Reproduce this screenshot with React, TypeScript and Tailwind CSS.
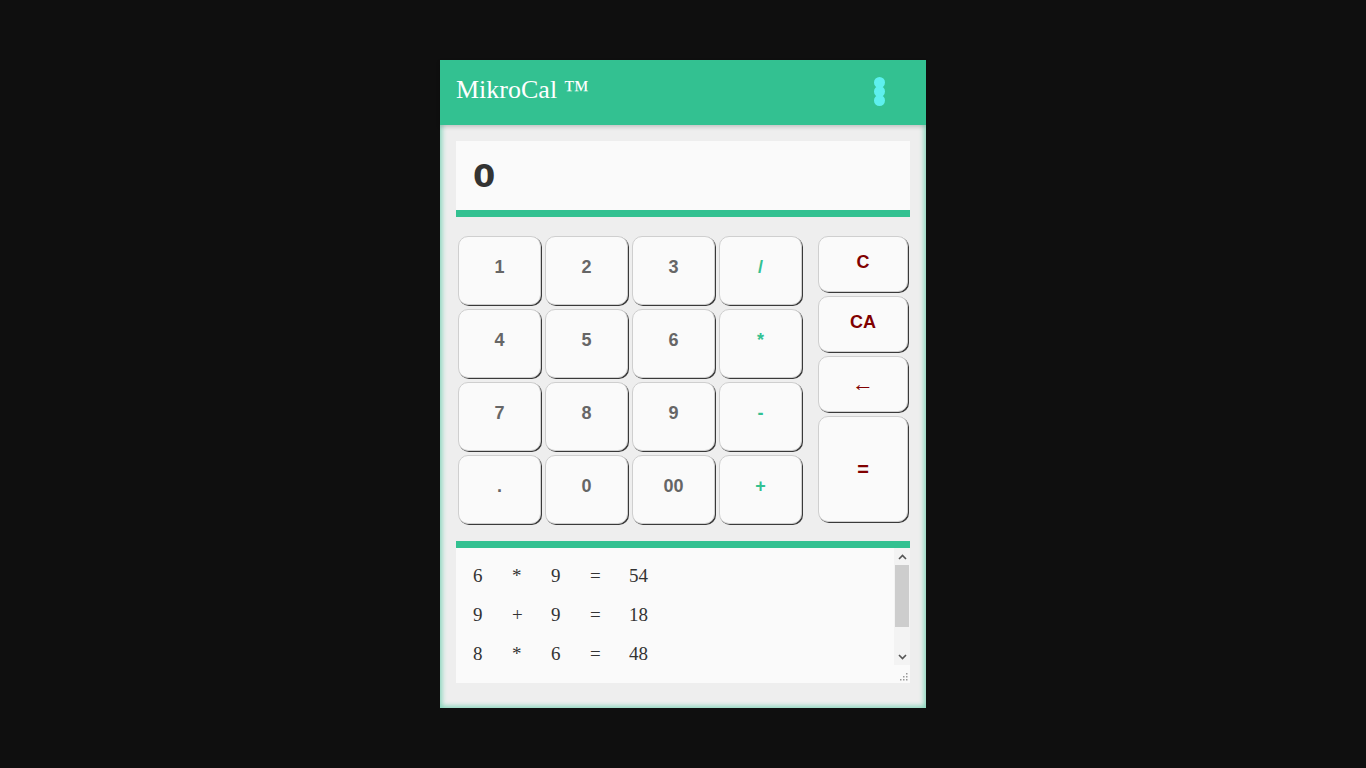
import React from "react";

const keys = [
  { k: "1", op: false },
  { k: "2", op: false },
  { k: "3", op: false },
  { k: "/", op: true },
  { k: "4", op: false },
  { k: "5", op: false },
  { k: "6", op: false },
  { k: "*", op: true },
  { k: "7", op: false },
  { k: "8", op: false },
  { k: "9", op: false },
  { k: "-", op: true },
  { k: ".", op: false },
  { k: "0", op: false },
  { k: "00", op: false },
  { k: "+", op: true },
];

const history = [
  ["6", "*", "9", "=", "54"],
  ["9", "+", "9", "=", "18"],
  ["8", "*", "6", "=", "48"],
];

const btn =
  "flex items-center justify-center bg-[#fafafa] border border-[#cfcfcf] rounded-[10px] shadow-[1px_1px_0_#3a3a3a] font-bold text-[18px] [font-family:'Liberation_Sans',Arial,sans-serif]";

export default function App() {
  return (
    <div className="min-h-screen w-full bg-[#0f0f0f] flex justify-center pt-[60px]">
      <div className="w-[486px] h-[648px] bg-[#eeeeee] flex flex-col shadow-[inset_0_0_5px_2px_rgba(51,193,145,0.55)]">
        <div className="h-[65px] bg-[#33c191] flex items-center justify-between pl-4 pr-[41px] shadow-[0_2px_4px_rgba(0,0,0,0.18)] relative">
          <span className="text-white text-[26px] [font-family:'Liberation_Serif','Times_New_Roman',serif] -mt-[6px]">
            MikroCal ™
          </span>
          <div className="flex flex-col items-center -mt-[3px]">
            <span className="w-[11px] h-[11px] rounded-full bg-[#5ef0ee]" />
            <span className="w-[11px] h-[11px] rounded-full bg-[#5ef0ee] -mt-[2px]" />
            <span className="w-[11px] h-[11px] rounded-full bg-[#5ef0ee] -mt-[2px]" />
          </div>
        </div>

        <div className="px-4 pt-4">
          <div className="h-[69px] bg-[#fafafa] flex items-center pl-[17px]">
            <span className="text-[32px] font-bold text-[#333] [font-family:'DejaVu_Sans',sans-serif] tracking-tight">
              0
            </span>
          </div>
          <div className="h-[7px] bg-[#33c191]" />
        </div>

        <div className="flex pl-[18px] pt-[19px]">
          <div className="grid grid-cols-[83px_83px_83px_83px] grid-rows-[69px_69px_69px_69px] gap-x-[4px] gap-y-[4px]">
            {keys.map((b) => (
              <div
                key={b.k}
                className={`${btn} pb-[6px] ${b.op ? "text-[#33c191]" : "text-[#666]"}`}
              >
                {b.k}
              </div>
            ))}
          </div>
          <div className="ml-[16px] w-[90px] flex flex-col gap-[4px]">
            <div className={`${btn} h-[56px] pb-[4px] text-[#800000]`}>C</div>
            <div className={`${btn} h-[56px] pb-[4px] text-[#800000]`}>CA</div>
            <div
              className={`${btn} h-[56px] pb-[2px] text-[#800000] !font-normal !text-[22px] [font-family:'DejaVu_Serif',serif]`}
            >
              ←
            </div>
            <div className={`${btn} h-[106px] text-[#800000] !text-[20px]`}>=</div>
          </div>
        </div>

        <div className="px-4 pt-[17px]">
          <div className="h-[7px] bg-[#33c191]" />
          <div className="h-[135px] bg-[#fafafa] flex">
            <div className="flex-1 pl-[17px] pt-[17px] flex flex-col gap-[17px] text-[19px] text-[#333] [font-family:'Liberation_Serif','Times_New_Roman',serif] leading-[22px]">
              {history.map((row, i) => (
                <div key={i} className="flex">
                  {row.map((c, j) => (
                    <span key={j} className="w-[39px]">
                      {c}
                    </span>
                  ))}
                </div>
              ))}
            </div>
            <div className="w-[16px] flex flex-col bg-[#f3f3f3]">
              <div className="h-[17px] flex items-center justify-center">
                <svg width="9" height="6" viewBox="0 0 9 6">
                  <path d="M1 5 L4.5 1.5 L8 5" stroke="#555" strokeWidth="1.6" fill="none" />
                </svg>
              </div>
              <div className="h-[62px] mx-[1px] bg-[#cdcdcd]" />
              <div className="flex-1" />
              <div className="h-[17px] flex items-center justify-center">
                <svg width="9" height="6" viewBox="0 0 9 6">
                  <path d="M1 1 L4.5 4.5 L8 1" stroke="#555" strokeWidth="1.6" fill="none" />
                </svg>
              </div>
              <div className="h-[18px] bg-[#fafafa] flex items-end justify-end pr-[2px] pb-[2px]">
                <svg width="8" height="8" viewBox="0 0 8 8">
                  <rect x="6" y="0" width="1.5" height="1.5" fill="#999" />
                  <rect x="3" y="3" width="1.5" height="1.5" fill="#999" />
                  <rect x="6" y="3" width="1.5" height="1.5" fill="#999" />
                  <rect x="0" y="6" width="1.5" height="1.5" fill="#999" />
                  <rect x="3" y="6" width="1.5" height="1.5" fill="#999" />
                  <rect x="6" y="6" width="1.5" height="1.5" fill="#999" />
                </svg>
              </div>
            </div>
          </div>
        </div>
      </div>
    </div>
  );
}
